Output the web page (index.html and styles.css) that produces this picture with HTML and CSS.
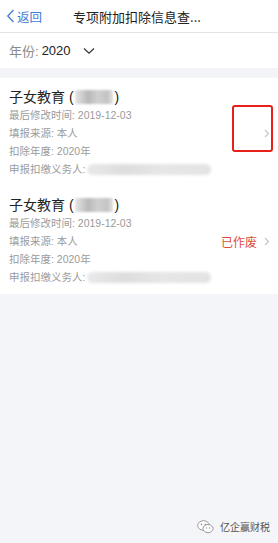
FILE: index.html
```html
<!DOCTYPE html>
<html lang="zh">
<head>
<meta charset="utf-8">
<link rel="stylesheet" href="styles.css">
</head>
<body>
<div class="page">
  <header class="nav">
    <div class="back">
      <svg class="back-icon" width="9" height="14" viewBox="0 0 9 14"><path d="M7.5 1 L1.8 7 L7.5 13" fill="none" stroke="#3f7bd6" stroke-width="1.3"/></svg>
      <span>返回</span>
    </div>
    <div class="title">专项附加扣除信息查...</div>
  </header>
  <div class="year">
    <span class="year-label">年份:</span>
    <span class="year-value">2020</span>
    <svg class="year-arrow" width="12" height="8" viewBox="0 0 12 8"><path d="M1 1.5 L6 6.2 L11 1.5" fill="none" stroke="#333" stroke-width="1.2"/></svg>
  </div>
  <div class="gap"></div>
  <div class="list">
    <div class="card">
      <div class="info">
        <div class="name">子女教育 (<span class="blur-name"></span>)</div>
        <div class="line">最后修改时间: 2019-12-03</div>
        <div class="line">填报来源: 本人</div>
        <div class="line">扣除年度: 2020年</div>
        <div class="line">申报扣缴义务人: <span class="blur-bar"></span></div>
      </div>
      <div class="side">
        <svg class="chev" width="6" height="9" viewBox="0 0 6 9"><path d="M1 1 L4.5 4.5 L1 8" fill="none" stroke="#c4c4c4" stroke-width="1.1"/></svg>
      </div>
      <div class="mark"></div>
    </div>
    <div class="card">
      <div class="info">
        <div class="name">子女教育 (<span class="blur-name"></span>)</div>
        <div class="line">最后修改时间: 2019-12-03</div>
        <div class="line">填报来源: 本人</div>
        <div class="line">扣除年度: 2020年</div>
        <div class="line">申报扣缴义务人: <span class="blur-bar"></span></div>
      </div>
      <div class="side">
        <span class="void">已作废</span>
        <svg class="chev" width="6" height="9" viewBox="0 0 6 9"><path d="M1 1 L4.5 4.5 L1 8" fill="none" stroke="#c4c4c4" stroke-width="1.1"/></svg>
      </div>
    </div>
  </div>
  <div class="watermark">
    <svg width="17" height="14" viewBox="0 0 17 14">
      <ellipse cx="6.5" cy="5.5" rx="5.8" ry="4.8" fill="#fff" stroke="#9a9a9a" stroke-width="1"/>
      <ellipse cx="11" cy="8.6" rx="5" ry="4.1" fill="#fff" stroke="#9a9a9a" stroke-width="1"/>
      <circle cx="4.5" cy="4.4" r="0.8" fill="#9a9a9a"/>
      <circle cx="8.3" cy="4.4" r="0.8" fill="#9a9a9a"/>
      <circle cx="9.5" cy="8" r="0.7" fill="#9a9a9a"/>
      <circle cx="12.6" cy="8" r="0.7" fill="#9a9a9a"/>
    </svg>
    <span>亿企赢财税</span>
  </div>
</div>
</body>
</html>
```

FILE: styles.css
```css
* { box-sizing: border-box; }
html, body {
  margin: 0;
  padding: 0;
  background: #f4f5f9;
  font-family: "Liberation Sans", "Noto Sans CJK SC", sans-serif;
}
.page {
  position: relative;
  width: 278px;
  height: 543px;
}
.nav {
  height: 33px;
  background: #fff;
  border-bottom: 1px solid #e4e4e6;
  display: flex;
  align-items: center;
  position: relative;
}
.back {
  display: flex;
  align-items: center;
  padding-left: 6px;
  color: #3f7bd6;
  font-size: 12.5px;
  gap: 2px;
}
.title {
  margin-left: 31px;
  font-size: 13px;
  color: #222;
  font-family: "Noto Sans CJK SC", sans-serif;
}
.year {
  height: 35px;
  background: #fff;
  display: flex;
  align-items: center;
  padding-left: 9px;
  font-size: 13px;
}
.year-label { color: #8a8a8a; }
.year-value { color: #222; margin-left: 3px; }
.year-arrow { margin-left: 12px; }
.gap {
  height: 10px;
  background: #f3f4f8;
}
.list { background: #fff; }
.card {
  position: relative;
  display: flex;
  align-items: center;
  padding: 10px 8px 8px 9px;
  height: 108px;
}
.info { flex: 1; }
.name {
  font-size: 14px;
  line-height: 18px;
  color: #222;
  display: flex;
  align-items: center;
}
.blur-name {
  display: inline-block;
  width: 38px;
  height: 14px;
  margin: 0 2px 0 1px;
  background: linear-gradient(90deg, #e6e6e6, #b9b9b9 35%, #d0d0d0 60%, #c4c4c4 85%, #e2e2e2);
  filter: blur(1.2px);
}
.line {
  font-size: 10.5px;
  line-height: 18px;
  color: #9b9b9b;
  display: flex;
  align-items: center;
  white-space: nowrap;
}
.blur-bar {
  display: inline-block;
  width: 124px;
  height: 11px;
  margin-left: 2px;
  background: linear-gradient(90deg, #e9e9e9, #dddddd 30%, #e6e6e6 60%, #e3e3e3);
  border-radius: 6px;
  filter: blur(1.5px);
}
.side {
  display: flex;
  align-items: center;
  gap: 7px;
}
.void {
  color: #e04a3c;
  font-size: 12px;
  font-family: "Noto Sans CJK SC", sans-serif;
}
.mark {
  position: absolute;
  left: 232px;
  top: 27px;
  width: 41px;
  height: 47px;
  border: 2px solid #e8201a;
  border-radius: 3px;
}
.watermark {
  position: absolute;
  left: 197px;
  top: 519px;
  display: flex;
  align-items: center;
  gap: 6px;
  font-size: 10px;
  color: #555;
  font-family: "Noto Sans CJK SC", sans-serif;
}
```
